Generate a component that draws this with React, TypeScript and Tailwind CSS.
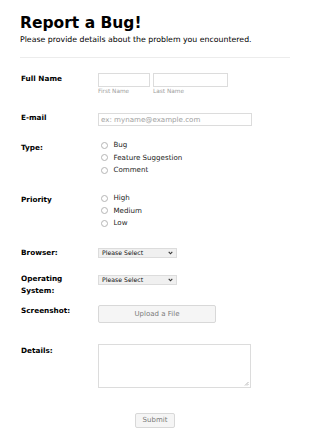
import React from 'react';

function Radio({ label }: { label: string }) {
    return (
        <div className="flex h-[12.5px] items-center">
            <span className="ml-[2.5px] size-[7px] rounded-full border border-[#b5b5b5] bg-white" />
            <span className="ml-[6px] text-[7.1px] leading-[10px] text-[#222]">{label}</span>
        </div>
    );
}

function FakeSelect() {
    return (
        <div className="flex h-[10px] w-[79px] items-center justify-between border border-[#dcdcdc] bg-[#f0f0f0] pr-[3px] pl-[3px]">
            <span className="text-[6.2px] leading-[8px] text-[#111]">Please Select</span>
            <svg width="5" height="4" viewBox="0 0 5 4">
                <path d="M0.7 0.8 L2.5 2.8 L4.3 0.8" fill="none" stroke="#333" strokeWidth="1.1" />
            </svg>
        </div>
    );
}

export default function App() {
    return (
        <div className="min-h-[440px] bg-white px-[20px] font-['DejaVu_Sans',sans-serif] text-black">
            {/* Header */}
            <div className="pt-[14px]">
                <h1 className="text-[15.5px] leading-[18px] font-bold">Report a Bug!</h1>
                <p className="mt-[3px] text-[7.8px] leading-[10px]">
                    Please provide details about the problem you encountered.
                </p>
            </div>
            <div className="mt-[12px] h-px w-[270px] bg-[#ececec]" />

            {/* Full Name */}
            <div className="mt-[15px] flex items-start">
                <div className="w-[78px] pt-[1px] pl-[1px] text-[7.3px] leading-[10px] font-bold">Full Name</div>
                <div className="flex gap-[3px]">
                    <div className="flex flex-col">
                        <div className="h-[14px] w-[52px] border border-[#dcdcdc]" />
                        <span className="mt-[1px] text-[5.8px] leading-[7px] text-[#a0a0a0]">First Name</span>
                    </div>
                    <div className="flex flex-col">
                        <div className="h-[14px] w-[75px] border border-[#dcdcdc]" />
                        <span className="mt-[1px] text-[5.8px] leading-[7px] text-[#a0a0a0]">Last Name</span>
                    </div>
                </div>
            </div>

            {/* E-mail */}
            <div className="mt-[18px] flex items-start">
                <div className="w-[78px] pl-[1px] text-[7.3px] leading-[10px] font-bold">E-mail</div>
                <div className="flex h-[13px] w-[154px] items-center border border-[#dcdcdc] pl-[2px]">
                    <span className="text-[7.1px] leading-[10px] text-[#a0a0a0]">ex: myname@example.com</span>
                </div>
            </div>

            {/* Type */}
            <div className="mt-[13px] flex items-start">
                <div className="w-[78px] pt-[4px] pl-[1px] text-[7.3px] leading-[10px] font-bold">Type:</div>
                <div className="flex flex-col">
                    <Radio label="Bug" />
                    <Radio label="Feature Suggestion" />
                    <Radio label="Comment" />
                </div>
            </div>

            {/* Priority */}
            <div className="mt-[15.5px] flex items-start">
                <div className="w-[78px] pt-[3px] pl-[1px] text-[7.3px] leading-[10px] font-bold">Priority</div>
                <div className="flex flex-col">
                    <Radio label="High" />
                    <Radio label="Medium" />
                    <Radio label="Low" />
                </div>
            </div>

            {/* Browser */}
            <div className="mt-[18px] flex items-start">
                <div className="w-[78px] pl-[1px] text-[7.3px] leading-[10px] font-bold">Browser:</div>
                <FakeSelect />
            </div>

            {/* Operating System */}
            <div className="mt-[17.5px] flex items-start">
                <div className="-mt-[2px] w-[78px] pl-[1px] text-[7.3px] leading-[12px] font-bold">
                    Operating
                    <br />
                    System:
                </div>
                <FakeSelect />
            </div>

            {/* Screenshot */}
            <div className="mt-[8px] flex items-start">
                <div className="w-[78px] pt-[1px] pl-[1px] text-[7.3px] leading-[10px] font-bold">Screenshot:</div>
                <div className="flex h-[18px] w-[118px] items-center justify-center rounded-[2px] border border-[#d8d8d8] bg-[#f5f5f5]">
                    <span className="text-[7px] leading-[10px] text-[#7a7a7a]">Upload a File</span>
                </div>
            </div>

            {/* Details */}
            <div className="mt-[21px] flex items-start">
                <div className="w-[78px] pt-[2px] pl-[1px] text-[7.3px] leading-[10px] font-bold">Details:</div>
                <div className="relative h-[44px] w-[153px] border border-[#dcdcdc]">
                    <svg className="absolute right-[1px] bottom-[1px]" width="5" height="5" viewBox="0 0 5 5">
                        <path d="M1 4.5 L4.5 1 M3 4.5 L4.5 3" stroke="#999" strokeWidth="0.7" />
                    </svg>
                </div>
            </div>

            {/* Submit */}
            <div className="mt-[24.5px] flex justify-center">
                <div className="flex h-[15.5px] w-[40px] items-center justify-center rounded-[2px] border border-[#d8d8d8] bg-[#f5f5f5]">
                    <span className="text-[7px] leading-[10px] text-[#7a7a7a]">Submit</span>
                </div>
            </div>
        </div>
    );
}
